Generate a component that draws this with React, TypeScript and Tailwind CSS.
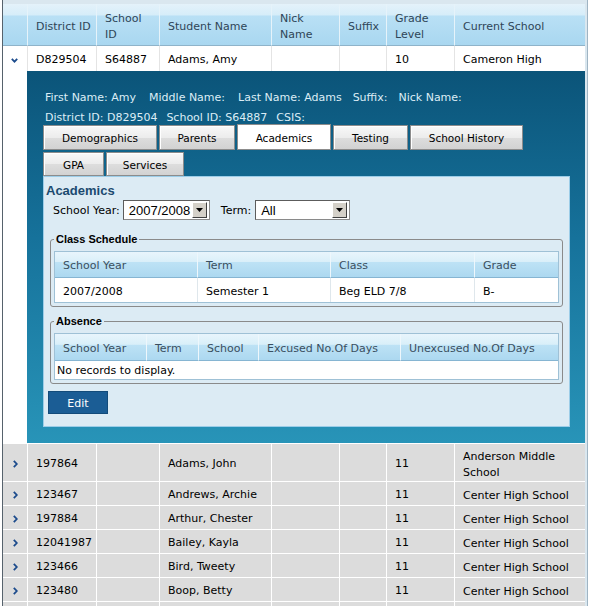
import React from "react";

const ChevronDown = () => (
  <svg width="7" height="5" viewBox="0 0 7 5">
    <polyline points="0.8,0.8 3.5,3.6 6.2,0.8" fill="none" stroke="#1c4b8c" strokeWidth="1.8" />
  </svg>
);

const ChevronRight = () => (
  <svg width="5" height="8" viewBox="0 0 5 8">
    <polyline points="0.8,0.8 3.8,4 0.8,7.2" fill="none" stroke="#1c4b8c" strokeWidth="1.8" />
  </svg>
);

const Arrow = () => (
  <svg width="7" height="4" viewBox="0 0 7 4">
    <polygon points="0,0 7,0 3.5,4" fill="#000" />
  </svg>
);

const Select = ({ value, w }: { value: string; w: string }) => (
  <div className={`${w} h-[20px] flex bg-white border border-[#8a8a8a] border-t-[#5c5c5c] border-l-[#5c5c5c]`}>
    <div className="flex-1 pl-[5px] pt-[1px] text-[13px] leading-[18px] [font-family:'Liberation_Sans',sans-serif]">
      {value}
    </div>
    <div className="w-[15px] my-[1px] mr-[2px] flex items-center justify-center bg-[#d4d0c8] border border-t-white border-l-white border-r-[#404040] border-b-[#404040]">
      <Arrow />
    </div>
  </div>
);

const Tab = ({ label, w, active }: { label: string; w: string; active?: boolean }) => (
  <div
    className={`${w} flex items-center justify-center pt-[3px] border text-[10.5px] ${
      active
        ? "h-[26px] bg-white border-[#8c8c8c]"
        : "h-[25px] border-[#8c8c8c] bg-[linear-gradient(to_bottom,#f8f8f8_0%,#ececec_50%,#dddddd_52%,#d2d2d2_100%)] shadow-[inset_1px_1px_0_#ffffff]"
    }`}
  >
    {label}
  </div>
);

const headCell =
  "flex items-center pl-[8px] pr-[2px] pt-[4px] leading-[16px] whitespace-nowrap border-b border-[#8fb3c9] bg-[linear-gradient(to_bottom,#e4f2fa_0%,#d6edf9_27%,#b9e0f5_29%,#a9d7f0_100%)] text-[#2f4557]";

const subHead =
  "flex items-center pl-[8px] pt-[4px] whitespace-nowrap border-b border-[#86b5d2] bg-[linear-gradient(to_bottom,#e8f5fc_0%,#d9eff9_40%,#bde2f5_42%,#acd8f0_100%)] text-[#3a4f60]";

const cell = "flex items-center pl-[8px] pt-[4px]";

const rows = [
  { id: "197864", name: "Adams, John", grade: "11", school: "Anderson Middle School", tall: true },
  { id: "123467", name: "Andrews, Archie", grade: "11", school: "Center High School" },
  { id: "197884", name: "Arthur, Chester", grade: "11", school: "Center High School" },
  { id: "12041987", name: "Bailey, Kayla", grade: "11", school: "Center High School" },
  { id: "123466", name: "Bird, Tweety", grade: "11", school: "Center High School" },
  { id: "123480", name: "Boop, Betty", grade: "11", school: "Center High School" },
  { id: "", name: "", grade: "", school: "" },
];

const App = () => {
  return (
    <div className="w-[590px] h-[606px] overflow-hidden bg-white text-[11px] text-black [font-family:'DejaVu_Sans',sans-serif]">
      <div className="ml-[2px] w-[586px] h-full pt-[4px] pr-[2px] bg-[#dae7ef] border-l border-[#56626c] border-r border-r-[#9fb4c3]">
        {/* header */}
        <div className="grid grid-cols-[24px_69px_63px_112px_68px_47px_68px_131px] h-[42px]">
          <div className={headCell}></div>
          <div className={`${headCell} border-l border-l-[#e6f3fa]`}>District ID</div>
          <div className={`${headCell} border-l border-l-[#e6f3fa]`}>
            School
            <br />
            ID
          </div>
          <div className={`${headCell} border-l border-l-[#e6f3fa]`}>Student Name</div>
          <div className={`${headCell} border-l border-l-[#e6f3fa]`}>
            Nick
            <br />
            Name
          </div>
          <div className={`${headCell} border-l border-l-[#e6f3fa]`}>Suffix</div>
          <div className={`${headCell} border-l border-l-[#e6f3fa]`}>
            Grade
            <br />
            Level
          </div>
          <div className={`${headCell} border-l border-l-[#e6f3fa]`}>Current School</div>
        </div>

        {/* expanded row */}
        <div className="grid grid-cols-[24px_69px_63px_112px_68px_47px_68px_131px] h-[25px] bg-white">
          <div className="flex items-center pl-[8px] pt-[3px]">
            <ChevronDown />
          </div>
          <div className={`${cell} border-l border-[#e4e4e4]`}>D829504</div>
          <div className={`${cell} border-l border-[#e4e4e4]`}>S64887</div>
          <div className={`${cell} border-l border-[#e4e4e4]`}>Adams, Amy</div>
          <div className="border-l border-[#e4e4e4]"></div>
          <div className="border-l border-[#e4e4e4]"></div>
          <div className={`${cell} border-l border-[#e4e4e4]`}>10</div>
          <div className={`${cell} border-l border-[#e4e4e4]`}>Cameron High</div>
        </div>

        <div className="grid grid-cols-[24px_558px] h-[372px]">
          <div className="bg-white"></div>
          <div className="pt-[17px] pl-[16px] bg-[linear-gradient(to_bottom,#0b5479_0%,#16729b_45%,#2894b8_100%)]">
            <div className="flex h-[20px] leading-[20px] pl-[2px] text-[#dcedf6]">
              <span className="mr-[13px]">First Name: Amy</span>
              <span className="mr-[13px]">Middle Name:</span>
              <span className="mr-[11px]">Last Name: Adams</span>
              <span className="mr-[11px]">Suffix:</span>
              <span>Nick Name:</span>
            </div>
            <div className="flex gap-[9px] h-[16px] leading-[20px] pl-[2px] text-[#dcedf6]">
              <span>District ID: D829504</span>
              <span>School ID: S64887</span>
              <span>CSIS:</span>
            </div>
            <div className="flex items-end gap-[2px] h-[26px]">
              <Tab label="Demographics" w="w-[114px]" />
              <Tab label="Parents" w="w-[76px]" />
              <Tab label="Academics" w="w-[94px]" active />
              <Tab label="Testing" w="w-[75px]" />
              <Tab label="School History" w="w-[113px]" />
            </div>
            <div className="flex gap-[2px] h-[24px] mt-[2px]">
              <Tab label="GPA" w="w-[61px] !h-[24px]" />
              <Tab label="Services" w="w-[78px] !h-[24px]" />
            </div>

            {/* panel */}
            <div className="w-[527px] border border-[#9ccde8] bg-[#dcebf4] pb-[12px]">
              <div className="pt-[5px] h-[22px] pl-[2px] leading-[18px] text-[13px] font-bold text-[#1b4a6f] [font-family:'Liberation_Sans',sans-serif]">
                Academics
              </div>
              <div className="mt-[1px] h-[20px] flex items-center pl-[9px]">
                <span className="pt-[3px]">School Year:</span>
                <div className="ml-[3px]">
                  <Select value="2007/2008" w="w-[87px]" />
                </div>
                <span className="ml-[11px] pt-[3px]">Term:</span>
                <div className="ml-[4px]">
                  <Select value="All" w="w-[95px]" />
                </div>
              </div>

              <fieldset className="mt-[12px] mx-[6px] px-[3px] pb-[3px] border border-[#8a8a8a] rounded-[3px]">
                <legend className="px-[2px] leading-[14px] text-[11px] font-bold [font-family:'Liberation_Sans',sans-serif]">
                  Class Schedule
                </legend>
                <div className="mt-[5px] border border-[#9fc1d6] bg-white">
                  <div className="grid grid-cols-[142px_133px_144px_84px] h-[26px]">
                    <div className={subHead}>School Year</div>
                    <div className={`${subHead} border-l border-l-[#eef7fc]`}>Term</div>
                    <div className={`${subHead} border-l border-l-[#eef7fc]`}>Class</div>
                    <div className={`${subHead} border-l border-l-[#eef7fc]`}>Grade</div>
                  </div>
                  <div className="grid grid-cols-[142px_133px_144px_84px] h-[24px]">
                    <div className={cell}>2007/2008</div>
                    <div className={`${cell} border-l border-[#dfe7ec]`}>Semester 1</div>
                    <div className={`${cell} border-l border-[#dfe7ec]`}>Beg ELD 7/8</div>
                    <div className={`${cell} border-l border-[#dfe7ec]`}>B-</div>
                  </div>
                </div>
              </fieldset>

              <fieldset className="mt-[7px] mx-[6px] px-[3px] pb-[3px] border border-[#8a8a8a] rounded-[3px]">
                <legend className="px-[2px] leading-[14px] text-[11px] font-bold [font-family:'Liberation_Sans',sans-serif]">
                  Absence
                </legend>
                <div className="mt-[5px] border border-[#9fc1d6] bg-white">
                  <div className="grid grid-cols-[91px_52px_60px_142px_158px] h-[27px]">
                    <div className={subHead}>School Year</div>
                    <div className={`${subHead} border-l border-l-[#eef7fc]`}>Term</div>
                    <div className={`${subHead} border-l border-l-[#eef7fc]`}>School</div>
                    <div className={`${subHead} border-l border-l-[#eef7fc]`}>Excused No.Of Days</div>
                    <div className={`${subHead} border-l border-l-[#eef7fc]`}>Unexcused No.Of Days</div>
                  </div>
                  <div className="h-[18px] flex items-center pl-[2px] pt-[2px]">No records to display.</div>
                </div>
              </fieldset>

              <button className="mt-[7px] ml-[4px] w-[60px] h-[23px] flex items-center justify-center pt-[4px] bg-[#1b5d95] border border-[#134b7a] text-white text-[11px]">
                Edit
              </button>
            </div>
          </div>
        </div>

        {/* collapsed rows */}
        {rows.map((r, i) => (
          <div
            key={i}
            className={`grid grid-cols-[24px_69px_63px_112px_68px_47px_68px_131px] bg-[#dcdcdc] border-b border-white ${
              r.tall ? "h-[39px]" : "h-[24px]"
            } ${i === 0 ? "border-t border-t-white" : ""}`}
          >
            <div className="flex items-center pl-[10px] pt-[3px]">{r.id && <ChevronRight />}</div>
            <div className={`${cell} border-l border-white`}>{r.id}</div>
            <div className="border-l border-white"></div>
            <div className={`${cell} border-l border-white`}>{r.name}</div>
            <div className="border-l border-white"></div>
            <div className="border-l border-white"></div>
            <div className={`${cell} border-l border-white`}>{r.grade}</div>
            <div className={`${cell} pr-[2px] leading-[16px] border-l border-white`}>{r.school}</div>
          </div>
        ))}
      </div>
    </div>
  );
};

export default App;
